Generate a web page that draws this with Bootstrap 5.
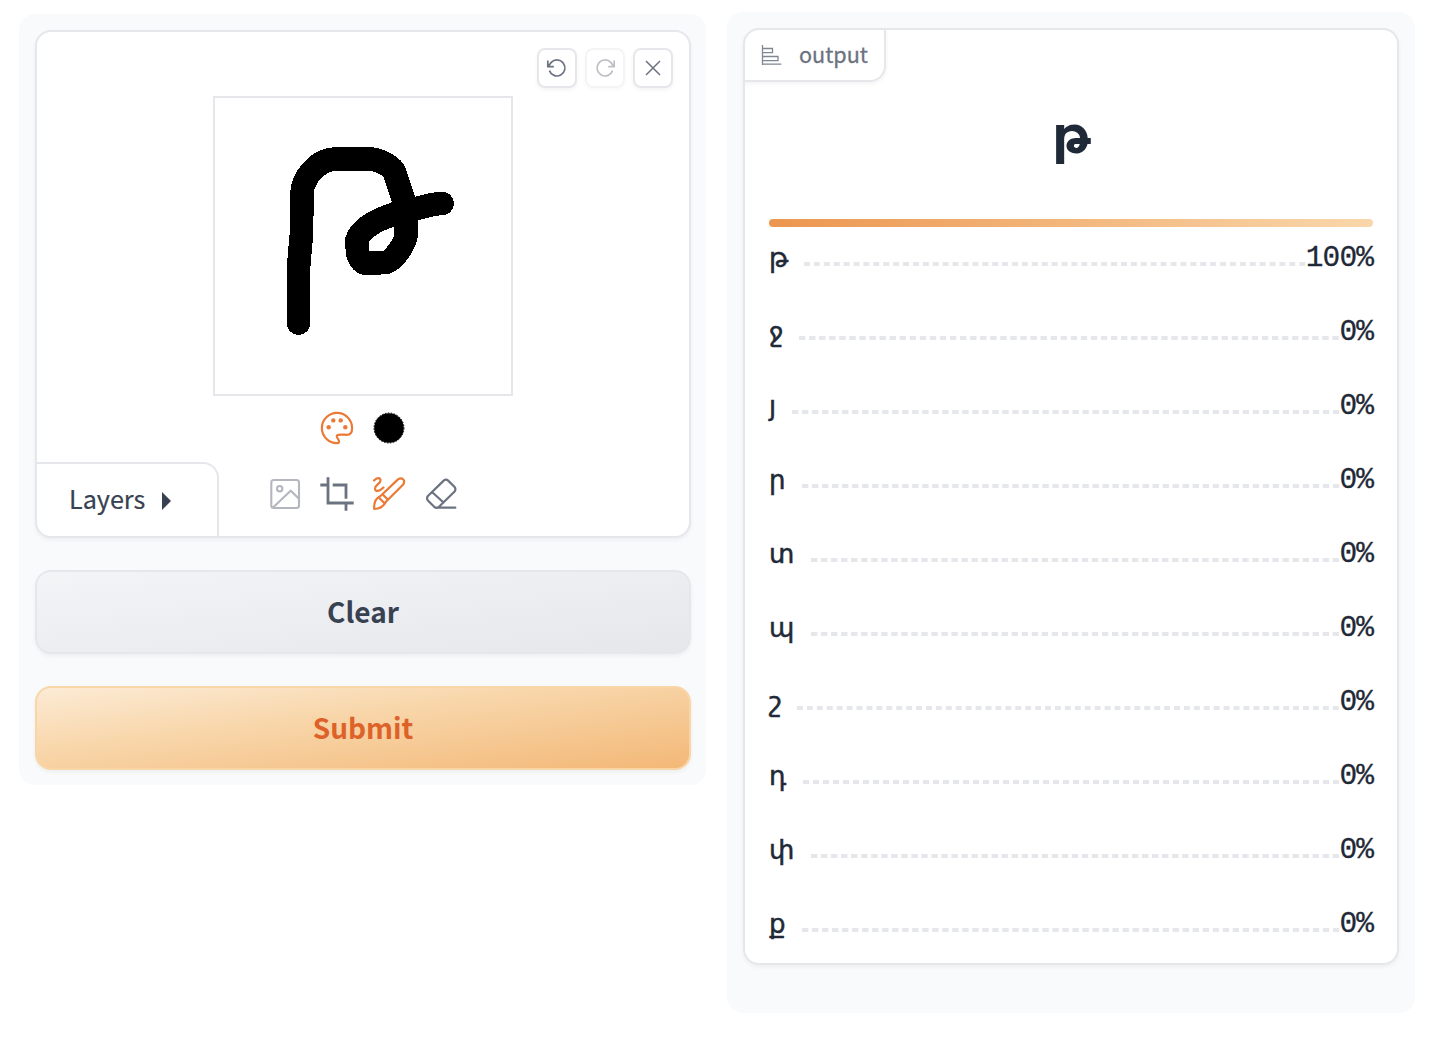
<!DOCTYPE html>
<html lang="en">
<head>
<meta charset="utf-8">
<meta name="viewport" content="width=device-width, initial-scale=1">
<title>Letter recognition</title>
<link href="https://cdn.jsdelivr.net/npm/bootstrap@5.3.0/dist/css/bootstrap.min.css" rel="stylesheet">
<style>
  body { font-family: "Noto Sans CJK SC", "DejaVu Sans", sans-serif; color: #1f2937; background: #fff; }
  .app-shell { padding: 12px 35px 0 19px; gap: 21px; }
  .pane { background: #f9fafb; border-radius: 16px; padding: 16px; }
  .pane-in { width: 687px; margin-top: 2px; height: 771px; padding: 16px 15px 0 16px; gap: 32px; }
  .pane-out { width: 688px; height: 1001px; }
  .block { background: #fff; border: 2px solid #e5e7eb; border-radius: 16px; box-shadow: 0 2px 4px rgba(0,0,0,.05); overflow: hidden; }
  .editor { height: 508px; }
  .tool-top { padding: 16px 16px 8px; gap: 8px; }
  .sq-btn { width: 40px; height: 40px; border: 2px solid #e5e7eb; border-radius: 8px; padding: 0; background: #fff; color: #6b7280; box-shadow: 0 2px 4px rgba(0,0,0,.05); }
  .sq-btn svg { margin: -2px; display: block; }
  .sq-btn:disabled { opacity: .45; border-color: #e5e7eb; color: #6b7280; }
  .sketch { width: 300px; height: 300px; border: 2px solid #e5e7eb; }
  .sketch svg { display: block; margin: -2px; }
  .swatches { height: 66px; padding-top: 14px; gap: 16px; flex-shrink: 0; }
  .tool-btn { width: 36px; height: 36px; padding: 0; border: 0; background: none; color: #6b7280; }
  .tool-btn svg { display: block; }
  .hot { color: #ea7a35; }
  .dim { opacity: .5; }
  .layers { width: 183px; height: 76px; margin-left: -1px; border: 2px solid #e5e7eb; border-bottom: 0; border-left: 0; border-top-right-radius: 16px; font-size: 25.2px; padding-left: 33px; padding-bottom: 2px; gap: 17px; color: #374151; }
  .layers span { margin-top: -2px; -webkit-text-stroke: .2px; }
  .layers svg { margin-top: 1px; }
  .tools { padding: 14px 0 0 48px; gap: 16px; }
  .big-btn { height: 84px; border-radius: 16px; border-width: 2px; font-size: 28px; font-weight: 700; box-shadow: 0 2px 4px rgba(0,0,0,.05); padding: 0 0 2px; flex-shrink: 0; }
  .btn-clear { color: #374151; border-color: #e5e7eb; background: linear-gradient(to bottom right, #f3f4f6, #e5e7eb); }
  .btn-go { color: #dc622a; border-color: #f9d5a7; background: linear-gradient(to bottom right, #fcebd5, #f8d6aa 40%, #f3b877); }
  .result { height: 937px; }
  .tag { width: 143px; height: 54px; margin: -2px 0 0 -2px; border: 2px solid #e5e7eb; border-bottom-right-radius: 16px; box-shadow: 0 2px 4px rgba(0,0,0,.05); color: #6b7280; font-size: 21.6px; padding-left: 15px; gap: 17px; border-top-left-radius: 16px; }
  .tag span { margin-top: -2px; -webkit-text-stroke: .3px; }
  .tag svg { opacity: .85; }
  .top-letter { font-family: "DejaVu Sans", sans-serif; font-weight: 700; font-size: 51px; line-height: 60px; height: 137px; padding: 24px 0 0 1px; }
  .scorebar { height: 8px; border-radius: 4px; margin: 0 24px; background: linear-gradient(to right, #ec964f, #f9d7ab); }
  .scores { margin: 0 24px; padding-top: 2px; }
  .score { height: 74px; }
  .letter { font-family: "DejaVu Sans", sans-serif; font-size: 26px; line-height: 30px; padding-top: 14px; white-space: nowrap; -webkit-text-stroke: .5px; }
  .dashes { height: 4px; margin: 33px -4px 0 0; background-image: linear-gradient(to right, #e5e7eb 60%, transparent 60%); background-size: 10px 4px; background-repeat: round no-repeat; }
  .pct { font-family: "Liberation Mono", monospace; font-size: 29.5px; letter-spacing: -.9px; line-height: 32px; padding-top: 13px; position: relative; -webkit-text-stroke: .3px; }
</style>
<script src="https://cdn.jsdelivr.net/npm/bootstrap@5.3.0/dist/js/bootstrap.bundle.min.js"></script>
</head>
<body>
<main class="app-shell d-flex align-items-start">
  <section class="pane pane-in d-flex flex-column flex-shrink-0">
    <div class="block editor d-flex flex-column flex-shrink-0">
      <div class="tool-top d-flex justify-content-end">
        <button class="btn sq-btn" aria-label="Undo"><svg width="40" height="40" fill="none" stroke="currentColor" stroke-width="1.7"><path d="M10.8 12.6V18.6H16.8M11.3 18.2L14.2 14.4A8 8 0 1 1 12.4 22.6"/></svg></button>
        <button class="btn sq-btn" aria-label="Redo" disabled><svg width="40" height="40" fill="none" stroke="currentColor" stroke-width="1.7"><path d="M29.2 12.6V18.6H23.2M28.7 18.2L25.8 14.4A8 8 0 1 0 27.6 22.6"/></svg></button>
        <button class="btn sq-btn" aria-label="Close"><svg width="40" height="40" fill="none" stroke="currentColor" stroke-width="1.5"><path d="M13 13L27 27M27 13L13 27"/></svg></button>
      </div>
      <div class="sketch mx-auto flex-shrink-0">
        <svg width="300" height="300" viewBox="213 96 300 300" fill="none" stroke="#000" stroke-width="23.6" stroke-linecap="round" stroke-linejoin="round" shape-rendering="crispEdges"><path d="M298.5 323V268L301.5 233L302 193C303 177 318 159 337 159H369C378 159 390 165 394 171L403 198L406 212V236C405 243 395 259 387 262L378 263H364C358 259 357 253 357 240C360 231 370 224 381 219L397 213L417 208.5C426 206 434 203.5 442 203.5"/></svg>
      </div>
      <div class="swatches d-flex justify-content-center">
        <button class="tool-btn hot" aria-label="Colors"><svg width="36" height="36" fill="none" stroke="currentColor" stroke-width="2.2"><path d="M18 33.1A15.100 15.100 0 1 1 33.1 18.2C33.1 22 31.5 24.8 27.5 24.8C25 24.8 22 24.3 19.4 24.8C16.5 25.5 18.2 27.8 19.6 30C20.8 32.2 19.8 33.1 18 33.1Z"/><g fill="currentColor" stroke="none"><circle cx="9.7" cy="17.3" r="2.2"/><circle cx="14.3" cy="10.4" r="2.2"/><circle cx="21.7" cy="10.4" r="2.2"/><circle cx="26.3" cy="17.3" r="2.2"/></g></svg></button>
        <button class="tool-btn" aria-label="Black"><svg width="36" height="36"><circle cx="18" cy="18" r="14.8"/><circle cx="18" cy="18" r="15" fill="none" stroke="#000" stroke-dasharray="1.5 1.5"/></svg></button>
      </div>
      <div class="d-flex align-items-start">
        <div class="layers d-flex align-items-center flex-shrink-0"><span>Layers</span><svg width="9" height="18"><path d="M0 0L9 9L0 18Z" fill="#374151"/></svg></div>
        <div class="tools d-flex">
          <button class="tool-btn dim" aria-label="Image"><svg width="36" height="36" fill="none" stroke="currentColor" stroke-width="2.1"><rect x="4.3" y="4" width="27.7" height="28" rx="2.5"/><circle cx="12.7" cy="12.7" r="2.7"/><path d="M6.3 31.3L23.7 14.7L32 22.7"/></svg></button>
          <button class="tool-btn" aria-label="Crop"><svg width="36" height="36" fill="none" stroke="currentColor" stroke-width="2.8"><path d="M1.3 9H9M9 1.3V27H34.7M13.7 9H27V22.7M27 28V34.7"/></svg></button>
          <button class="tool-btn hot" aria-label="Brush"><svg width="36" height="36" fill="none" stroke="currentColor" stroke-width="2.2" stroke-linecap="round" stroke-linejoin="round"><path d="M3 4.5C6 1 9.5 1.5 9.5 4.5C9.5 7.5 4 9 4 12.5C4 16.5 9 15 12.5 11.5"/><path d="M9.5 20L27 3.4C31 .6 34.8 4.2 32.2 8.5L15.2 25.5C12.5 30.5 9 33 3.2 33C2.8 27 5 22 9.5 20ZM7.8 21.5L13.5 27.2M11.5 18.2L17 23.7"/></svg></button>
          <button class="tool-btn" aria-label="Eraser"><svg width="36" height="36" fill="none" stroke="currentColor" stroke-width="2.2" stroke-linejoin="round" stroke-linecap="round"><path d="M11.2 30.8L4.9 24.5Q3.2 22.3 4.9 20L20.7 4.6Q23 2.7 25.2 4.6L31.6 11Q33.2 13.3 31.6 15.5L16 30.8Q13.6 32.7 11.2 30.8ZM9 16L20.5 26.5M14 31.7H32.3"/></svg></button>
        </div>
      </div>
    </div>
    <button class="btn big-btn btn-clear w-100">Clear</button>
    <button class="btn big-btn btn-go w-100">Submit</button>
  </section>

  <section class="pane pane-out flex-shrink-0">
    <div class="block result">
      <div class="tag d-flex align-items-center"><svg width="22" height="22" fill="none" stroke="currentColor" stroke-width="1.3"><path d="M2.5 1V21M2 20.2H21.3M2.5 4.5H12.5V8.7H2.5M2.5 12.5H18V16.7H2.5"/></svg><span>output</span></div>
      <div class="top-letter text-center">թ</div>
      <div class="scorebar"></div>
      <div class="scores">
        <div class="score d-flex"><div class="letter" style="width:35px">թ</div><div class="dashes flex-fill"></div><div class="pct">100%</div></div>
        <div class="score d-flex"><div class="letter" style="width:30px">ջ</div><div class="dashes flex-fill"></div><div class="pct">0%</div></div>
        <div class="score d-flex"><div class="letter" style="width:23px">յ</div><div class="dashes flex-fill"></div><div class="pct">0%</div></div>
        <div class="score d-flex"><div class="letter" style="width:33px">ր</div><div class="dashes flex-fill"></div><div class="pct">0%</div></div>
        <div class="score d-flex"><div class="letter" style="width:42px">տ</div><div class="dashes flex-fill"></div><div class="pct">0%</div></div>
        <div class="score d-flex"><div class="letter" style="width:42px">պ</div><div class="dashes flex-fill"></div><div class="pct">0%</div></div>
        <div class="score d-flex"><div class="letter" style="width:28px">շ</div><div class="dashes flex-fill"></div><div class="pct">0%</div></div>
        <div class="score d-flex"><div class="letter" style="width:34px">դ</div><div class="dashes flex-fill"></div><div class="pct">0%</div></div>
        <div class="score d-flex"><div class="letter" style="width:42px">փ</div><div class="dashes flex-fill"></div><div class="pct">0%</div></div>
        <div class="score d-flex"><div class="letter" style="width:33px">ք</div><div class="dashes flex-fill"></div><div class="pct">0%</div></div>
      </div>
    </div>
  </section>
</main>
</body>
</html>
